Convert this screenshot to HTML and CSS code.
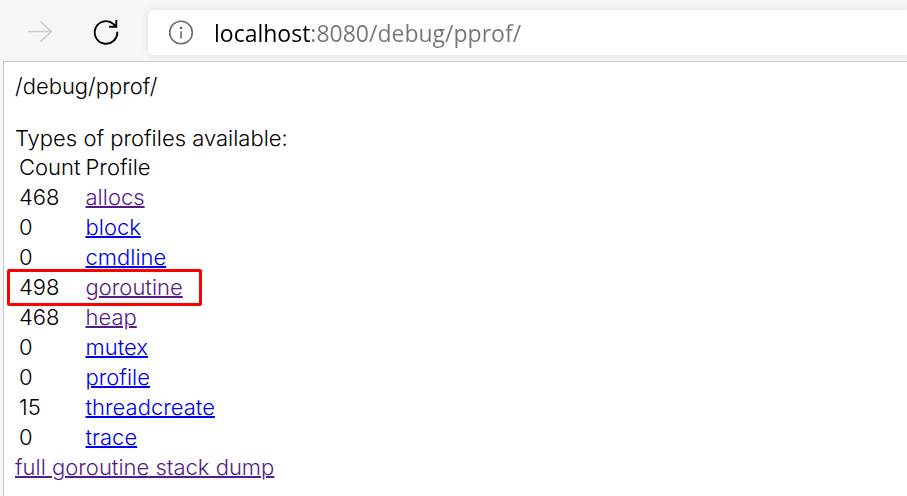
FILE: index.html
```html
<!DOCTYPE html>
<html lang="en">
<head>
<meta charset="utf-8">
<title>/debug/pprof/</title>
<link rel="stylesheet" href="styles.css">
</head>
<body>
<header class="toolbar">
  <button class="tool forward" type="button" aria-label="Forward" disabled>
    <svg width="26" height="24" viewBox="0 0 26 24"><path d="M1 10.5H24.5M13.3 0.5L24.3 10.5L13.3 20.8"/></svg>
  </button>
  <button class="tool reload" type="button" aria-label="Reload">
    <svg width="26" height="26" viewBox="0 0 26 26"><path d="M24.3 11.8A11.3 11.3 0 1 1 20.6 4.1L23 6.6M23.3 0V6.7H16.2"/></svg>
  </button>
  <div class="address">
    <button class="info" type="button" aria-label="Site information">
      <svg width="26" height="26" viewBox="0 0 26 26"><circle cx="13" cy="12.5" r="11.3"/><path d="M13 11.3V18.4"/><circle class="dot" cx="13" cy="8" r="1.3"/></svg>
    </button>
    <input class="url" type="text" aria-label="Address" value="localhost:8080/debug/pprof/" spellcheck="false">
  </div>
</header>
<main class="page">
  <p class="path">/debug/pprof/</p>
  <p class="intro">Types of profiles available:</p>
  <table class="profiles">
    <thead><tr><td>Count</td><td>Profile</td></tr></thead>
    <tbody>
      <tr><td>468</td><td><a class="visited" href="#allocs">allocs</a></td></tr>
      <tr><td>0</td><td><a href="#block">block</a></td></tr>
      <tr><td>0</td><td><a href="#cmdline">cmdline</a></td></tr>
      <tr class="marked"><td>498</td><td><a class="visited" href="#goroutine">goroutine</a></td></tr>
      <tr><td>468</td><td><a class="visited" href="#heap">heap</a></td></tr>
      <tr><td>0</td><td><a href="#mutex">mutex</a></td></tr>
      <tr><td>0</td><td><a href="#profile">profile</a></td></tr>
      <tr><td>15</td><td><a href="#threadcreate">threadcreate</a></td></tr>
      <tr><td>0</td><td><a href="#trace">trace</a></td></tr>
    </tbody>
  </table>
  <a class="visited" href="#dump">full goroutine stack dump</a>
</main>
</body>
</html>
```
FILE: styles.css
```css
* { box-sizing: border-box; }

body {
  margin: 0;
  min-height: 100vh;
  display: flex;
  flex-direction: column;
  background: #f6f6f6;
  color: #000;
  font: 300 22px/26px Inter, sans-serif;
}

.toolbar {
  display: flex;
  align-items: center;
  padding: 10px 0 6px 27px;
}

button {
  display: flex;
  padding: 0;
  border: 0;
  background: none;
}

svg {
  overflow: visible;
  fill: none;
  stroke: currentColor;
  stroke-width: 1.6;
}

.forward { color: #cdcdcd; }
.reload { margin-left: 40px; color: #000; }
.reload svg { stroke-width: 1.9; }

.address {
  flex: 1;
  display: flex;
  align-items: center;
  gap: 20px;
  height: 45px;
  margin-left: 29px;
  padding-left: 20px;
  border-radius: 6px 0 0 6px;
  background: #fff;
  box-shadow: 0 0 8px rgba(0, 0, 0, 0.1);
}

.info { color: #6b6b6b; }
.dot { fill: currentColor; stroke: none; }

.url {
  flex: 1;
  min-width: 0;
  padding: 0;
  border: 0;
  outline: 0;
  font: 400 23px/34px "Open Sans", sans-serif;
  color: transparent;
  caret-color: #000;
  /* host in black, port and path in grey */
  background: linear-gradient(to right, #000 97px, #767676 97px);
  -webkit-background-clip: text;
  background-clip: text;
}

.page {
  flex: 1;
  margin-left: 3px;
  padding: 11px;
  border: 1px solid #c8c8c8;
  border-width: 1px 0 0 1px;
  background: #fff;
}

p { margin: 0; }
.path { margin-bottom: 26px; }

.profiles {
  border-spacing: 3px;
  margin: 0;
}

.profiles td { padding: 0 1px; line-height: 27px; }

.marked { position: relative; }

/* red frame laid over the highlighted row */
.marked::after {
  content: "";
  position: absolute;
  inset: -5px 17px -5px -11px;
  border: 3px solid #f00;
  border-radius: 2px;
  pointer-events: none;
}

a {
  color: #00e;
  text-decoration-thickness: 2px;
}
a.visited { color: #551a8b; }
```
